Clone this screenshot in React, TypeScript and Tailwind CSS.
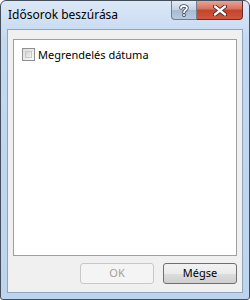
export default function App() {
  return (
    <div className="w-[250px] h-[300px] bg-white">
      <div className="w-[250px] h-[300px] rounded-t-[6px] rounded-b-[3px] border border-[#454f5c] bg-[linear-gradient(to_bottom,#dbe8f7,#c3d8f1_40px,#bdd4ef)] flex flex-col px-[6px] pb-[6px] font-['Noto_Sans',sans-serif]">
        <div className="h-[28px] flex items-start justify-between">
          <div className="pt-[5px] pl-[1px] text-[12px] text-black">Idősorok beszúrása</div>
          <div className="flex">
            <div className="w-[26px] h-[19px] rounded-bl-[4px] border border-t-0 border-[#6d7f95] bg-[linear-gradient(to_bottom,#e3ebf4,#c4d1e0_50%,#a9bbd0_51%,#b8c9dc)] flex items-center justify-center">
              <svg width="10" height="13" viewBox="0 0 10 13">
                <path d="M2 4 C2 1.5 8 1.2 8 4 C8 6 5 6 5 8.3 M5 11 L5 11.2" fill="none" stroke="#3b4f69" strokeWidth="3.6" strokeLinecap="round" />
                <path d="M2 4 C2 1.5 8 1.2 8 4 C8 6 5 6 5 8.3 M5 11 L5 11.2" fill="none" stroke="#ffffff" strokeWidth="1.8" strokeLinecap="round" />
              </svg>
            </div>
            <div className="w-[46px] h-[19px] rounded-br-[4px] border border-t-0 border-l-0 border-[#6d2a2a] bg-[linear-gradient(to_bottom,#e8a493,#d7705c_45%,#c4422c_50%,#d0583f)] flex items-center justify-center">
              <svg width="14" height="11" viewBox="0 0 14 11">
                <path d="M2 1.5 L12 9.5 M12 1.5 L2 9.5" stroke="#3a1a1a" strokeWidth="4" strokeLinecap="round" />
                <path d="M2 1.5 L12 9.5 M12 1.5 L2 9.5" stroke="#ffffff" strokeWidth="2.4" strokeLinecap="round" />
              </svg>
            </div>
          </div>
        </div>
        <div className="flex-1 border border-[#8ea4bf] bg-[#f0f0f0] flex flex-col px-[5px] pt-[9px] pb-[8px]">
          <div className="flex-1 border border-[#a0a0a0] bg-white px-[8px] pt-[7px]">
            <label className="flex items-center gap-[3px] text-[11px] leading-[15px] text-black">
              <span className="w-[13px] h-[13px] border border-[#8e8f8f] bg-[linear-gradient(135deg,#dcdcdc,#fbfbfb)] p-[2px]">
                <span className="block w-full h-full border border-[#c9c9c9] bg-[linear-gradient(135deg,#d2d2d2,#f4f4f4)]" />
              </span>
              Megrendelés dátuma
            </label>
          </div>
          <div className="flex justify-end gap-[9px] pt-[7px]">
            <button className="w-[74px] h-[21px] rounded-[3px] border border-[#c8c8c8] bg-[#f4f4f4] text-[11px] text-[#a0a0a0]">
              OK
            </button>
            <button className="w-[74px] h-[21px] rounded-[3px] border border-[#707070] bg-[linear-gradient(to_bottom,#f2f2f2,#ebebeb_50%,#dddddd_51%,#cfcfcf)] text-[11px] text-black">
              Mégse
            </button>
          </div>
        </div>
      </div>
    </div>
  );
}
